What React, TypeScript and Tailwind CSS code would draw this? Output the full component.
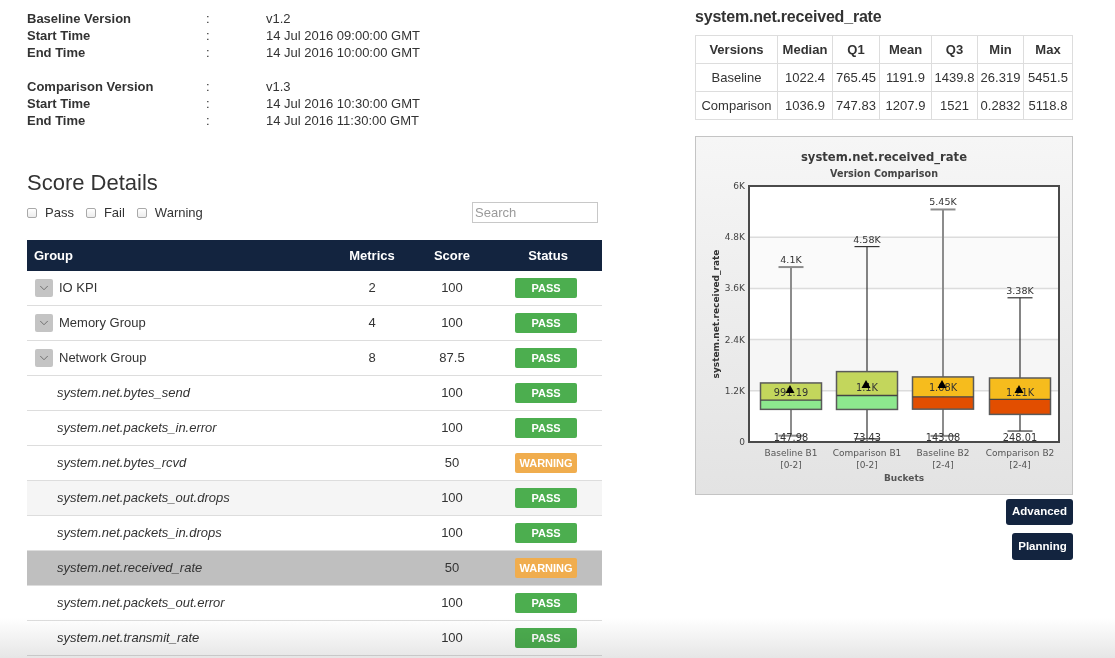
import React from 'react';
import { ChevronDown } from 'lucide-react';

type Status = 'PASS' | 'WARNING';

interface Row {
  name: string;
  group?: boolean;
  metrics?: string;
  score: string;
  status: Status;
  tone?: 'hover' | 'active';
}

const rows: Row[] = [
  { name: 'IO KPI', group: true, metrics: '2', score: '100', status: 'PASS' },
  { name: 'Memory Group', group: true, metrics: '4', score: '100', status: 'PASS' },
  { name: 'Network Group', group: true, metrics: '8', score: '87.5', status: 'PASS' },
  { name: 'system.net.bytes_send', score: '100', status: 'PASS' },
  { name: 'system.net.packets_in.error', score: '100', status: 'PASS' },
  { name: 'system.net.bytes_rcvd', score: '50', status: 'WARNING' },
  { name: 'system.net.packets_out.drops', score: '100', status: 'PASS', tone: 'hover' },
  { name: 'system.net.packets_in.drops', score: '100', status: 'PASS' },
  { name: 'system.net.received_rate', score: '50', status: 'WARNING', tone: 'active' },
  { name: 'system.net.packets_out.error', score: '100', status: 'PASS' },
  { name: 'system.net.transmit_rate', score: '100', status: 'PASS' },
];

const stats = [
  { version: 'Baseline', values: ['1022.4', '765.45', '1191.9', '1439.8', '26.319', '5451.5'] },
  { version: 'Comparison', values: ['1036.9', '747.83', '1207.9', '1521', '0.2832', '5118.8'] },
];

const statCols = [
  { label: 'Versions', w: 'w-[82px]' },
  { label: 'Median', w: 'w-[55px]' },
  { label: 'Q1', w: 'w-[47px]' },
  { label: 'Mean', w: 'w-[52px]' },
  { label: 'Q3', w: 'w-[46px]' },
  { label: 'Min', w: 'w-[46px]' },
  { label: 'Max', w: 'w-[49px]' },
];

/* ──────────────────────────── Chart data ──────────────────────────── */

interface Box {
  name: string;
  range: string;
  cx: number;
  max: number;
  q3: number;
  med: number;
  q1: number;
  min: number;
  minLabel: string;
  maxLabel: string;
  meanLabel: string;
  meanY: number;
  base: boolean;
  top: string;
  bottom: string;
}

const boxes: Box[] = [
  {
    name: 'Baseline B1', range: '[0-2]', cx: 95, max: 4100, q3: 1384, med: 980, q1: 765,
    min: 147.98, minLabel: '147.98', maxLabel: '4.1K', meanLabel: '991.19', meanY: 255,
    base: true, top: '#c3d65c', bottom: '#8de88e',
  },
  {
    name: 'Comparison B1', range: '[0-2]', cx: 171, max: 4580, q3: 1650, med: 1090, q1: 763,
    min: 73.43, minLabel: '73.43', maxLabel: '4.58K', meanLabel: '1.1K', meanY: 250,
    base: false, top: '#c3d65c', bottom: '#8de88e',
  },
  {
    name: 'Baseline B2', range: '[2-4]', cx: 247, max: 5450, q3: 1525, med: 1058, q1: 770,
    min: 143.08, minLabel: '143.08', maxLabel: '5.45K', meanLabel: '1.08K', meanY: 250,
    base: true, top: '#f6bc1d', bottom: '#e24e00',
  },
  {
    name: 'Comparison B2', range: '[2-4]', cx: 324, max: 3380, q3: 1500, med: 997, q1: 647,
    min: 257, minLabel: '248.01', maxLabel: '3.38K', meanLabel: '1.21K', meanY: 255,
    base: false, top: '#f6bc1d', bottom: '#e24e00',
  },
];

const PL = 53;
const PR = 363;
const PT = 49;
const PB = 305;
const Y = (v: number) => PB - (v * (PB - PT)) / 6000;

const BoxChart: React.FC = () => {
  const font = 'DejaVu Sans, Verdana, sans-serif';
  return (
    <svg width="376" height="357" viewBox="0 0 376 357" style={{ fontFamily: font }}>
      <text x="188" y="24" textAnchor="middle" fontSize="11.6" fontWeight="bold" fill="#3a3a3a">
        system.net.received_rate
      </text>
      <text x="188" y="39.5" textAnchor="middle" fontSize="9.6" fontWeight="bold" fill="#444">
        Version Comparison
      </text>

      {/* plot area */}
      <rect x={PL} y={PT} width={PR - PL} height={PB - PT} fill="#fff" />
      <rect x={PL} y={Y(2400)} width={PR - PL} height={Y(1200) - Y(2400)} fill="#f6f6f6" />
      <rect x={PL} y={Y(4800)} width={PR - PL} height={Y(3600) - Y(4800)} fill="#fafafa" />
      {[1200, 2400, 3600, 4800].map((v) => (
        <line key={v} x1={PL} x2={PR} y1={Y(v)} y2={Y(v)} stroke="#dcdcdc" strokeWidth="1.5" />
      ))}

      {/* y axis labels */}
      {[
        [0, '0'],
        [1200, '1.2K'],
        [2400, '2.4K'],
        [3600, '3.6K'],
        [4800, '4.8K'],
        [6000, '6K'],
      ].map(([v, l]) => (
        <text key={l as string} x="49" y={Y(v as number) + 3} textAnchor="end" fontSize="9" fill="#444">
          {l}
        </text>
      ))}
      <text
        transform="translate(23 177) rotate(-90)"
        textAnchor="middle"
        fontSize="9"
        fontWeight="bold"
        fill="#333"
      >
        system.net.received_rate
      </text>

      {boxes.map((b) => {
        const stroke = b.base ? '#8c8c8c' : '#333';
        const sw = b.base ? 2 : 1.2;
        return (
          <g key={b.name}>
            <line x1={b.cx} x2={b.cx} y1={Y(b.max)} y2={Y(b.min)} stroke={stroke} strokeWidth={sw} />
            <line x1={b.cx - 12.5} x2={b.cx + 12.5} y1={Y(b.max)} y2={Y(b.max)} stroke={stroke} strokeWidth={sw} />
            <line x1={b.cx - 12.5} x2={b.cx + 12.5} y1={Y(b.min)} y2={Y(b.min)} stroke={stroke} strokeWidth={sw} />
            <text x={b.cx} y={Y(b.max) - 4} textAnchor="middle" fontSize="9.5" fill="#333">
              {b.maxLabel}
            </text>
            <rect x={b.cx - 30.5} y={Y(b.q3)} width="61" height={Y(b.med) - Y(b.q3)} fill={b.top} />
            <rect x={b.cx - 30.5} y={Y(b.med)} width="61" height={Y(b.q1) - Y(b.med)} fill={b.bottom} />
            <rect
              x={b.cx - 30.5}
              y={Y(b.q3)}
              width="61"
              height={Y(b.q1) - Y(b.q3)}
              fill="none"
              stroke="#5a5a5a"
              strokeWidth="1.5"
            />
            <line x1={b.cx - 30.5} x2={b.cx + 30.5} y1={Y(b.med)} y2={Y(b.med)} stroke="#444" strokeWidth="1.3" />
            <text x={b.cx} y={b.meanY + 3.5} textAnchor="middle" fontSize="9.8" fill="#333">
              {b.meanLabel}
            </text>
            <polygon
              points={`${b.cx - 1 - 4.5},${b.meanY + 1} ${b.cx - 1 + 4.5},${b.meanY + 1} ${b.cx - 1},${b.meanY - 7}`}
              fill="#000"
            />
            <text x={b.cx} y="303.5" textAnchor="middle" fontSize="9.8" fill="#333">
              {b.minLabel}
            </text>
            <text x={b.cx} y="319" textAnchor="middle" fontSize="9" fill="#555">
              {b.name}
            </text>
            <text x={b.cx} y="331" textAnchor="middle" fontSize="9" fill="#555">
              {b.range}
            </text>
          </g>
        );
      })}

      <rect x={PL} y={PT} width={PR - PL} height={PB - PT} fill="none" stroke="#4a4a4a" strokeWidth="2" />
      <text x={(PL + PR) / 2} y="343.5" textAnchor="middle" fontSize="9" fontWeight="bold" fill="#555">
        Buckets
      </text>
    </svg>
  );
};

/* ──────────────────────────── Pieces ──────────────────────────── */

const Badge: React.FC<{ status: Status }> = ({ status }) => (
  <span
    className={`inline-flex h-[20px] w-[62px] items-center justify-center rounded-[2px] text-[11px] font-bold text-white ${
      status === 'PASS' ? 'bg-[#4cae4f]' : 'bg-[#f0ad4e]'
    }`}
  >
    {status}
  </span>
);

const Check: React.FC<{ label: string }> = ({ label }) => (
  <label className="flex items-center gap-[8px]">
    <span className="block h-[10px] w-[10px] rounded-[2px] border border-[#a9a9a9] bg-gradient-to-b from-white to-[#ececec]" />
    <span>{label}</span>
  </label>
);

const InfoRow: React.FC<{ label: string; value: string }> = ({ label, value }) => (
  <div className="flex h-[17px] items-center">
    <span className="w-[179px] font-bold">{label}</span>
    <span className="w-[60px]">:</span>
    <span>{value}</span>
  </div>
);

export default function App() {
  return (
    <div className="relative h-[658px] w-[1115px] overflow-hidden bg-white pl-[27px] font-['Liberation_Sans',Arial,sans-serif] text-[13px] text-[#333]">
      <div className="flex">
        {/* Left column */}
        <div className="w-[575px] pt-[10px]">
          <InfoRow label="Baseline Version" value="v1.2" />
          <InfoRow label="Start Time" value="14 Jul 2016 09:00:00 GMT" />
          <InfoRow label="End Time" value="14 Jul 2016 10:00:00 GMT" />
          <div className="mt-[17px]">
            <InfoRow label="Comparison Version" value="v1.3" />
            <InfoRow label="Start Time" value="14 Jul 2016 10:30:00 GMT" />
            <InfoRow label="End Time" value="14 Jul 2016 11:30:00 GMT" />
          </div>

          <h2 className="mt-[41px] h-[26px] text-[22px] leading-[26px]">Score Details</h2>

          <div className="mt-[6px] flex h-[21px] items-center">
            <div className="flex items-center gap-[12px]">
              <Check label="Pass" />
              <Check label="Fail" />
              <Check label="Warning" />
            </div>
            <div className="ml-auto mr-[4px] flex h-[21px] w-[126px] items-center border border-[#c8c8c8] px-[2px] text-[#9a9a9a]">
              Search
            </div>
          </div>

          {/* Table */}
          <div className="mt-[17px]">
            <div className="flex h-[31px] items-center bg-[#13243f] font-bold text-white">
              <div className="flex-1 pl-[7px]">Group</div>
              <div className="w-[76px] text-center">Metrics</div>
              <div className="w-[84px] text-center">Score</div>
              <div className="w-[108px] text-center">Status</div>
            </div>
            {rows.map((r) => (
              <div
                key={r.name}
                className={`flex h-[35px] items-center border-b border-[#dddddd] ${
                  r.tone === 'active' ? 'bg-[#bfbfbf]' : r.tone === 'hover' ? 'bg-[#f5f5f5]' : 'bg-white'
                }`}
              >
                {r.group ? (
                  <div className="flex flex-1 items-center gap-[6px] pl-[8px]">
                    <span className="flex h-[18px] w-[18px] items-center justify-center rounded-[2px] bg-[#c4c4c4]">
                      <ChevronDown size={14} strokeWidth={1.4} color="#5f5f5f" />
                    </span>
                    <span>{r.name}</span>
                  </div>
                ) : (
                  <div className="flex-1 pl-[30px] italic">{r.name}</div>
                )}
                <div className="w-[76px] text-center">{r.metrics ?? ''}</div>
                <div className="w-[84px] text-center">{r.score}</div>
                <div className="flex w-[108px] justify-center pr-[4px]">
                  <Badge status={r.status} />
                </div>
              </div>
            ))}
          </div>
        </div>

        {/* Right column */}
        <div className="ml-[93px] w-[378px] pt-[7px]">
          <h3 className="h-[20px] text-[16px] leading-[20px] font-bold tracking-[-0.2px]">
            system.net.received_rate
          </h3>
          <table className="mt-[8px] border-collapse">
            <thead>
              <tr className="h-[28px]">
                {statCols.map((c) => (
                  <th key={c.label} className={`${c.w} border border-[#dddddd] text-center font-bold`}>
                    {c.label}
                  </th>
                ))}
              </tr>
            </thead>
            <tbody>
              {stats.map((s) => (
                <tr key={s.version} className="h-[28px]">
                  <td className="border border-[#dddddd] text-center">{s.version}</td>
                  {s.values.map((v, i) => (
                    <td key={i} className="border border-[#dddddd] text-center">
                      {v}
                    </td>
                  ))}
                </tr>
              ))}
            </tbody>
          </table>

          <div className="mt-[16px] h-[359px] w-[378px] border border-[#c4c4c4] bg-gradient-to-b from-[#f6f6f6] to-[#e3e3e3]">
            <BoxChart />
          </div>

          <div className="mt-[4px] flex flex-col items-end gap-[8px]">
            <button className="h-[26px] w-[67px] rounded-[3px] bg-[#13243f] text-[11.5px] font-bold text-white">
              Advanced
            </button>
            <button className="h-[27px] w-[61px] rounded-[3px] bg-[#13243f] text-[11.5px] font-bold text-white">
              Planning
            </button>
          </div>
        </div>
      </div>

      {/* bottom fade */}
      <div className="pointer-events-none absolute inset-x-0 bottom-0 h-[40px] bg-gradient-to-b from-white to-[#e6e6e6] mix-blend-multiply" />
    </div>
  );
}
